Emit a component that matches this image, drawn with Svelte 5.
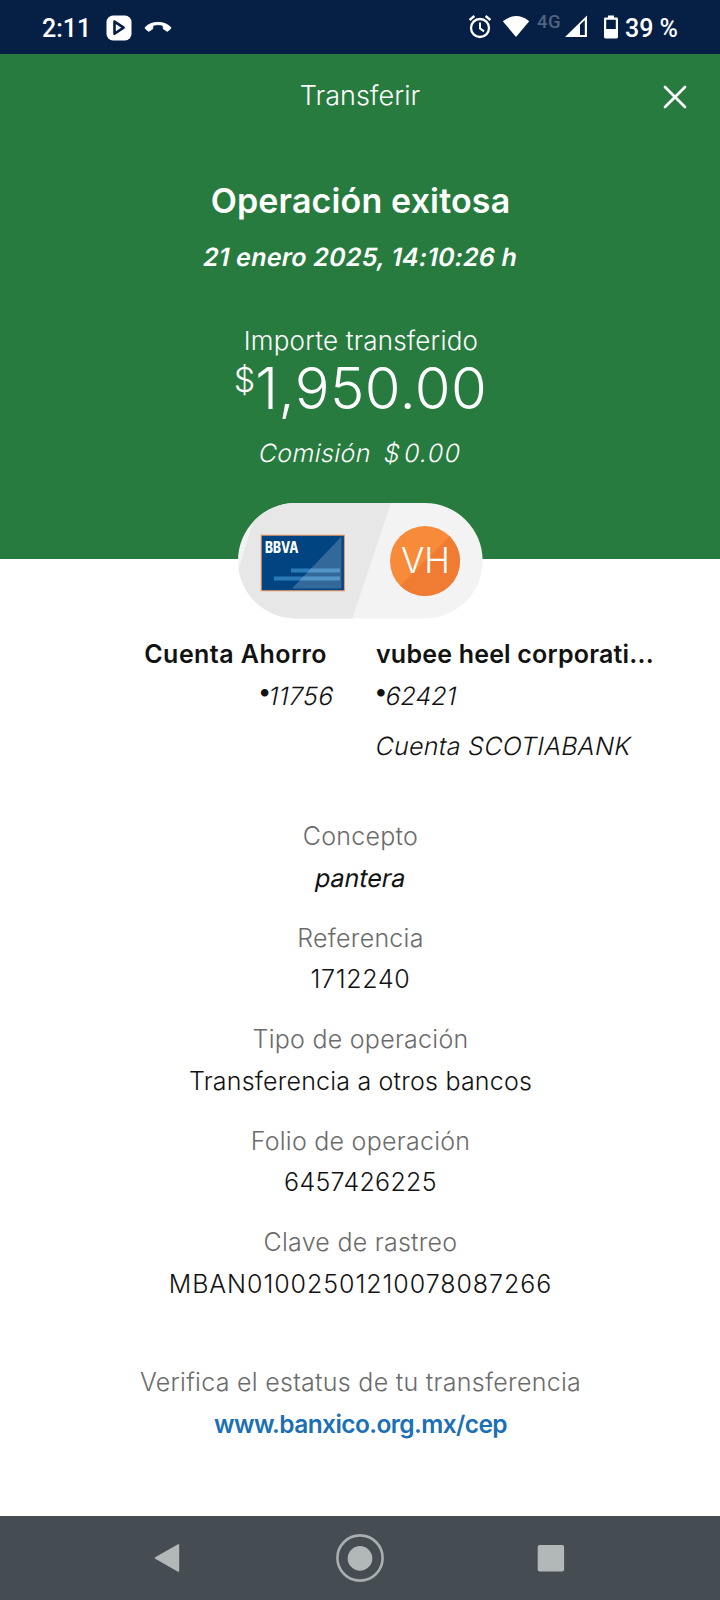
<script>
  const details = [
    { label: 'Concepto', value: 'pantera', key: 'concept' },
    { label: 'Referencia', value: '1712240', key: 'reference' },
    { label: 'Tipo de operación', value: 'Transferencia a otros bancos', key: 'kind' },
    { label: 'Folio de operación', value: '6457426225', key: 'folio' },
    { label: 'Clave de rastreo', value: 'MBAN01002501210078087266', key: 'tracking' }
  ];
</script>

<div class="screen">
  <div class="status">
    <span class="clock">2:11</span>
    <svg class="play" width="26" height="26" viewBox="0 0 26 26">
      <rect x="0.5" y="0.5" width="25" height="25" rx="6.5" fill="#fff" />
      <path d="M8.5 6.6 L17.6 12.6 L8.5 18.8 Z" fill="#fff" stroke="#061f45" stroke-width="2.6" stroke-linejoin="round" />
    </svg>
    <svg class="call" width="28" height="14" viewBox="0 0 28 14">
      <path d="M1 7.6 C7 0.6 21 0.6 27 7.6 L26.4 9 L23.4 11.4 L19.4 9 L19 5.4 C15.6 4.4 12.4 4.4 9 5.4 L8.6 9 L4.6 11.4 L1.6 9 Z" fill="#fff" stroke="#fff" stroke-width="0.8" stroke-linejoin="round" />
    </svg>
    <span class="spacer"></span>
    <svg class="alarm" width="24" height="26" viewBox="0 0 24 26">
      <g fill="none" stroke="#fff">
        <circle cx="12" cy="14" r="9" stroke-width="2.3" />
        <path d="M12 8.6 V14.4 L16 17.4" stroke-width="2" />
        <path d="M1.6 6 L6.4 2 M22.4 6 L17.6 2" stroke-width="2.3" />
      </g>
    </svg>
    <svg class="wifi" width="28" height="24" viewBox="0 0 28 24">
      <path d="M0.8 6.2 Q14 -4 27.2 6.2 L14 22 Z" fill="#fff" />
    </svg>
    <span class="network">4G</span>
    <svg class="signal" width="24" height="24" viewBox="0 0 24 24">
      <path d="M1 22 L23 0.6 V22 Z M16 9.8 V20 H20.8 V5.2 Z" fill="#fff" fill-rule="evenodd" />
    </svg>
    <svg class="battery" width="16" height="24" viewBox="0 0 16 24">
      <path d="M5 0.4 H11 V2.6 H13.6 Q15 2.6 15 4 V22 Q15 23.4 13.6 23.4 H2.4 Q1 23.4 1 22 V4 Q1 2.6 2.4 2.6 H5 Z M3.2 4.8 V14 H12.8 V4.8 Z" fill="#fff" fill-rule="evenodd" />
    </svg>
    <span class="percent">39 %</span>
  </div>

  <header class="summary">
    <div class="bar">
      <span></span>
      <h1>Transferir</h1>
      <svg width="24" height="24" viewBox="0 0 24 24">
        <path d="M2 2 L22 22 M22 2 L2 22" stroke="#fff" stroke-width="2.7" stroke-linecap="round" />
      </svg>
    </div>
    <h2>Operación exitosa</h2>
    <p class="date slanted">21 enero 2025, 14:10:26 h</p>
    <p class="caption">Importe transferido</p>
    <p class="amount"><span class="currency">$</span><span class="figure">1,950.00</span></p>
    <p class="fee slanted"><span>Comisión</span><span class="fee-amount"><span class="fee-sign">$</span>0.00</span></p>
  </header>

  <svg class="pill" width="246" height="116" viewBox="0 0 246 116">
    <defs>
      <clipPath id="pill-shape"><rect x="1" y="0" width="244.6" height="115.5" rx="57.7" /></clipPath>
      <clipPath id="avatar-shape"><circle cx="188" cy="58" r="35" /></clipPath>
    </defs>
    <g clip-path="url(#pill-shape)">
      <rect width="246" height="116" fill="#f3f3f3" />
      <path d="M-14 116 L22 0 H154 L115 116 Z" fill="#e7e7e7" />
    </g>
    <rect x="24.2" y="32.2" width="83.2" height="55.6" fill="#004481" stroke="#f09a63" stroke-width="1" />
    <g fill="#2a7ab9">
      <rect x="54" y="65.5" width="49" height="4" />
      <rect x="37" y="73.5" width="66" height="4" />
    </g>
    <path d="M104.5 33.5 V85.5 H55 Z" fill="#fff" fill-opacity="0.2" />
    <text x="28" y="50.2" class="bank" textLength="33.5" lengthAdjust="spacingAndGlyphs">BBVA</text>
    <g clip-path="url(#avatar-shape)">
      <rect x="150" y="20" width="76" height="76" fill="#f78b3a" />
      <path d="M163 83 L213 33 L230 60 L220 100 H163 Z" fill="#f07b33" />
    </g>
    <text x="164" y="70" class="initials" textLength="49" lengthAdjust="spacingAndGlyphs">VH</text>
  </svg>

  <section class="accounts">
    <div class="from">
      <p class="name">Cuenta Ahorro</p>
      <p class="number"><span class="dot">•</span><span class="slanted digits">11756</span></p>
    </div>
    <div class="to">
      <p class="name">vubee heel corporati...</p>
      <p class="number"><span class="dot">•</span><span class="slanted digits">62421</span></p>
      <p class="bank-name slanted">Cuenta SCOTIABANK</p>
    </div>
  </section>

  <dl class="details">
    {#each details as item (item.key)}
      <div>
        <dt>{item.label}</dt>
        <dd class={item.key} class:slanted={item.key === 'concept'}>{item.value}</dd>
      </div>
    {/each}
  </dl>

  <footer class="verify">
    <p>Verifica el estatus de tu transferencia</p>
    <a href="#cep">www.banxico.org.mx/cep</a>
  </footer>

  <nav class="keys">
    <svg width="26" height="30" viewBox="0 0 26 30">
      <path d="M1.6 15 L24.4 2 V28 Z" fill="#b2b7b8" stroke="#b2b7b8" stroke-width="1.6" stroke-linejoin="round" />
    </svg>
    <svg class="home" width="50" height="50" viewBox="0 0 50 50">
      <circle cx="25" cy="25" r="22.6" fill="none" stroke="#a9aeb1" stroke-width="2.6" />
      <circle cx="25" cy="25.4" r="12.3" fill="#b2b7b8" />
    </svg>
    <svg width="28" height="28" viewBox="0 0 28 28">
      <rect x="0.7" y="0.9" width="26.4" height="26.6" rx="2" fill="#b2b7b8" />
    </svg>
  </nav>
</div>

<style>
  :global(body) {
    margin: 0;
    background: #fff;
  }
  .screen {
    display: flex;
    flex-direction: column;
    width: 720px;
    height: 1600px;
    overflow: hidden;
    background: #fff;
    color: #121212;
    font-family: Inter, 'Open Sans', sans-serif;
    font-size: 25px;
    font-weight: 300;
    white-space: nowrap;
  }
  h1, h2, p, dl, dt, dd {
    margin: 0;
    font-weight: 300;
  }
  svg {
    display: block;
    flex: none;
  }
  /* Slanted roman letterforms, keeping the two-storey "a" */
  .slanted { transform: skewX(-11deg); }
  .status {
    display: flex;
    align-items: center;
    box-sizing: border-box;
    height: 54px;
    flex: none;
    padding: 0 42px;
    background: #061f45;
    color: #fff;
    font-family: Roboto, sans-serif;
    font-size: 25px;
    font-weight: 500;
  }
  .clock { width: 64px; padding-top: 3px; }
  .play { margin-top: 1px; }
  .call { margin-left: 12px; }
  .spacer { flex: 1; }
  .alarm { margin-right: 10px; }
  .wifi { margin-right: 7px; }
  .network {
    width: 27px;
    margin-top: -10px;
    color: #52627e;
    font-size: 18.5px;
    letter-spacing: 0.6px;
  }
  .signal { margin-right: 15px; }
  .battery { margin-right: 6px; }
  .percent { padding-top: 3px; }

  .summary {
    display: flex;
    flex-direction: column;
    height: 505px;
    flex: none;
    background: #277b3e;
    color: #fff;
    text-align: center;
  }
  .bar {
    display: grid;
    grid-template-columns: 24px 1fr 24px;
    align-items: center;
    padding: 0 33px;
    height: 84px;
  }
  .bar svg { margin-top: 1px; }
  h1 { font-size: 27px; line-height: 84px; }
  h2 {
    margin-top: 38px;
    padding-left: 1px;
    font-size: 34px;
    font-weight: 600;
    letter-spacing: 0.15px;
    line-height: 50px;
  }
  .date {
    margin-top: 10px;
    padding-left: 1px;
    font-size: 25px;
    font-weight: 600;
    letter-spacing: 0.24px;
    line-height: 42px;
  }
  .caption {
    margin-top: 39px;
    padding-left: 2px;
    font-size: 26px;
    letter-spacing: 0.2px;
    line-height: 48px;
  }
  .amount {
    display: flex;
    justify-content: center;
    height: 70px;
    margin-top: -12px;
    padding-left: 1px;
    line-height: 70px;
  }
  .currency { font-size: 34px; line-height: 53px; }
  .figure { font-size: 58px; letter-spacing: 0.35px; }
  .fee {
    display: flex;
    justify-content: center;
    gap: 13px;
    margin-top: 5px;
    padding-left: 1px;
    letter-spacing: 0.4px;
    line-height: 50px;
  }
  .fee-amount { letter-spacing: 1.3px; }
  .fee-sign { margin-right: 3px; }

  .pill {
    position: relative;
    margin: -56px auto 0;
  }
  .bank { font: 800 15.5px Inter, sans-serif; fill: #fff; }
  .initials { font: 300 36px Inter, sans-serif; fill: #fff; }

  .accounts {
    display: grid;
    grid-template-columns: 333px 1fr;
    column-gap: 43px;
    margin-top: 14px;
    height: 183px;
    flex: none;
  }
  .from { text-align: right; }
  .name { font-size: 25px; font-weight: 600; line-height: 42px; letter-spacing: 0.2px; }
  .from .name { padding-right: 6px; letter-spacing: 0.45px; }
  .number { height: 42px; line-height: 42px; }
  .digits { display: inline-block; }
  .from .digits { margin-right: -1px; letter-spacing: 0.4px; }
  .dot {
    display: inline-block;
    width: 10px;
    font-size: 28px;
    text-indent: -3px;
    line-height: 30px;
    vertical-align: 4px;
  }
  .from .dot { width: 9px; }
  .bank-name { margin-top: 8px; line-height: 42px; letter-spacing: 0.3px; }

  .details {
    display: flex;
    flex-direction: column;
    gap: 18.5px;
    padding-left: 1px;
    text-align: center;
    line-height: 41.5px;
  }
  dt { color: #6b6b6b; letter-spacing: 0.25px; }
  dd.concept { font-weight: 400; }
  dd.reference { letter-spacing: 0.7px; }
  dd.kind { letter-spacing: 0.2px; }
  dd.folio { letter-spacing: 0.3px; }
  dd.tracking { letter-spacing: 0.95px; }

  .verify {
    display: flex;
    flex-direction: column;
    margin-top: 56px;
    padding-left: 1px;
    align-items: center;
    color: #6b6b6b;
    letter-spacing: 0.28px;
    line-height: 42px;
  }
  .verify a {
    color: #1b70b5;
    font-size: 24.5px;
    font-weight: 600;
    letter-spacing: -0.6px;
    text-decoration: none;
  }

  .keys {
    display: flex;
    align-items: center;
    justify-content: space-between;
    box-sizing: border-box;
    height: 84px;
    margin-top: auto;
    padding: 0 155px 0 154px;
    background: #454d52;
  }
  .home { margin-left: 3px; }
</style>
